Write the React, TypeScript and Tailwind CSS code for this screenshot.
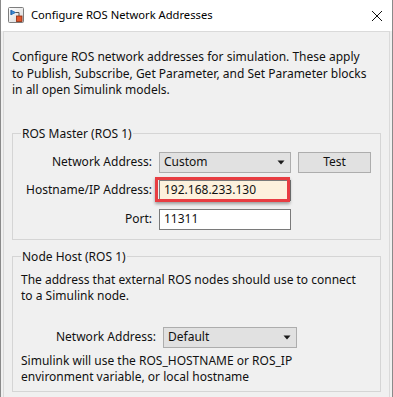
import React from "react";

const font = { fontFamily: '"Segoe UI", "Noto Sans", "Open Sans", sans-serif' };

function Arrow() {
  return (
    <svg width="8" height="5" viewBox="0 0 8 5" className="shrink-0">
      <path d="M0.5 0.5 H7.5 L4 4.5 Z" fill="#1a1a1a" />
    </svg>
  );
}

function AppIcon() {
  return (
    <svg width="17" height="17" viewBox="0 0 17 17" className="shrink-0">
      <defs>
        <linearGradient id="bgk" x1="0" y1="0" x2="1" y2="1">
          <stop offset="0" stopColor="#ffffff" />
          <stop offset="1" stopColor="#d6d6d6" />
        </linearGradient>
      </defs>
      <rect x="0.5" y="0.5" width="15" height="15" rx="1" fill="url(#bgk)" stroke="#7d7d7d" />
      <path d="M3 3 V8 M3 3.2 L7.5 5.5 L3 7.8 Z" fill="#3a8fd6" stroke="#1f5fa8" strokeWidth="0.8" />
      <path d="M7.5 5.5 H11 V9" fill="none" stroke="#555" strokeWidth="1" />
      <rect x="8.5" y="9" width="5.5" height="5.5" fill="#e2572b" stroke="#8a2a10" strokeWidth="0.8" />
    </svg>
  );
}

function Dropdown({ value, width }: { value: string; width: string }) {
  return (
    <div
      className={`${width} h-[21px] bg-[#e1e1e1] border border-[#adadad] flex items-center justify-between pl-[4px] pr-[5px] shrink-0`}
    >
      <span>{value}</span>
      <Arrow />
    </div>
  );
}

export default function App() {
  return (
    <div
      className="w-[393px] h-[397px] overflow-hidden bg-white border-x border-[#8a8a8a] text-[12px] text-[#111] flex flex-col"
      style={font}
    >
      {/* Title bar */}
      <div className="h-[31px] shrink-0 bg-white flex items-center pl-[7px] pr-[9px]">
        <AppIcon />
        <span className="ml-[6px] text-[11.2px] text-black">Configure ROS Network Addresses</span>
        <div className="flex-1" />
        <svg width="12" height="12" viewBox="0 0 12 12">
          <path d="M1 1 L11 11 M11 1 L1 11" stroke="#111" strokeWidth="1" />
        </svg>
      </div>

      {/* Body */}
      <div className="flex-1 bg-[#f0f0f0] px-[2px]">
        <div className="h-[400px] border border-[#dadada] px-[8px] pt-[17px]">
          <p className="leading-[16.5px] whitespace-nowrap">
            Configure ROS network addresses for simulation. These apply
            <br />
            to Publish, Subscribe, Get Parameter, and Set Parameter blocks
            <br />
            in all open Simulink models.
          </p>

          <fieldset className="mt-[27px] border border-[#d5d5d5] pb-[9px]">
            <legend className="ml-[8px] px-[1px] leading-[16px]">ROS Master (ROS 1)</legend>
            <div className="mt-[10px] flex flex-col">
              <div className="flex items-center">
                <span className="w-[139px] text-right">Network Address:</span>
                <div className="w-[7px]" />
                <Dropdown value="Custom" width="w-[132px]" />
                <div className="w-[7px]" />
                <div className="w-[73px] h-[21px] bg-[#e1e1e1] border border-[#adadad] flex items-center justify-center">
                  Test
                </div>
              </div>
              <div className="flex items-center mt-[7px]">
                <span className="w-[139px] text-right">Hostname/IP Address:</span>
                <div className="w-[7px]" />
                <div className="relative">
                  <div className="w-[132px] h-[21px] bg-[#fdf1dd] border border-[#7a7a7a] flex items-center pl-[4px]">
                    192.168.233.130
                  </div>
                  <div className="absolute left-[-4px] top-[-3px] w-[135px] h-[25px] border-[3px] border-[#e83d42] shadow-[0_2px_3px_rgba(0,0,0,0.35)]" />
                </div>
              </div>
              <div className="flex items-center mt-[8px]">
                <span className="w-[139px] text-right">Port:</span>
                <div className="w-[7px]" />
                <div className="w-[132px] h-[21px] bg-white border border-[#7a7a7a] flex items-center pl-[4px]">
                  11311
                </div>
              </div>
            </div>
          </fieldset>

          <fieldset className="mt-[9px] border border-[#d5d5d5] px-[8px] pb-[6px]">
            <legend className="px-[1px] leading-[16px]">Node Host (ROS 1)</legend>
            <p className="mt-[7px] leading-[16px] whitespace-nowrap">
              The address that external ROS nodes should use to connect
              <br />
              to a Simulink node.
            </p>
            <div className="flex items-center mt-[23px]">
              <span className="w-[135px] text-right">Network Address:</span>
              <div className="w-[7px]" />
              <Dropdown value="Default" width="w-[134px]" />
            </div>
            <p className="mt-[5px] leading-[16px] whitespace-nowrap">
              Simulink will use the ROS_HOSTNAME or ROS_IP
              <br />
              environment variable, or local hostname
            </p>
          </fieldset>
        </div>
      </div>
    </div>
  );
}
